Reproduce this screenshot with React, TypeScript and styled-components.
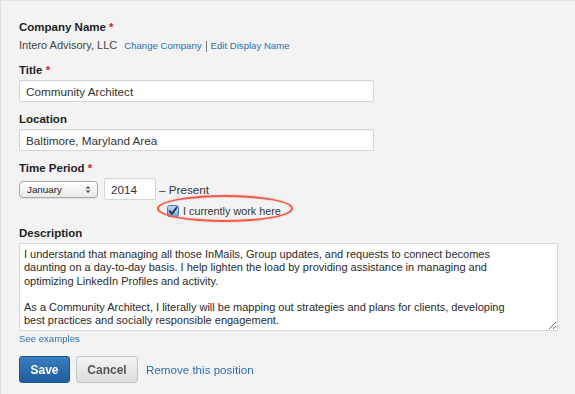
import { FC } from "react";
import styled, { createGlobalStyle } from "styled-components";

const GlobalStyle = createGlobalStyle`
  html, body {
    margin: 0;
    padding: 0;
    background: #f3f3f3;
  }
  body {
    font-family: "Liberation Sans", Arial, sans-serif;
    color: #333;
  }
`;

const description = `I understand that managing all those InMails, Group updates, and requests to connect becomes daunting on a day-to-day basis. I help lighten the load by providing assistance in managing and optimizing LinkedIn Profiles and activity.

As a Community Architect, I literally will be mapping out strategies and plans for clients, developing best practices and socially responsible engagement.`;

const App: FC = () => {
  return (
    <Page>
      <GlobalStyle />
      <Form>
        <Field>
          <Label>
            Company Name <Req>*</Req>
          </Label>
          <CompanyRow>
            <span>Intero Advisory, LLC</span>
            <LinkGroup>
              <SmallLink>Change Company</SmallLink>
              <Divider />
              <SmallLink>Edit Display Name</SmallLink>
            </LinkGroup>
          </CompanyRow>
        </Field>

        <Field>
          <Label>
            Title <Req>*</Req>
          </Label>
          <TextInput defaultValue="Community Architect" />
        </Field>

        <Field>
          <Label>Location</Label>
          <TextInput defaultValue="Baltimore, Maryland Area" />
        </Field>

        <Field>
          <Label>
            Time Period <Req>*</Req>
          </Label>
          <PeriodRow>
            <SelectBox>
              <span>January</span>
              <svg width="6" height="9" viewBox="0 0 6 9">
                <path d="M0.7 3.4 L3 1 L5.3 3.4 Z" fill="#444" />
                <path d="M0.7 5.6 L3 8 L5.3 5.6 Z" fill="#444" />
              </svg>
            </SelectBox>
            <YearInput defaultValue="2014" />
            <Present>– Present</Present>
          </PeriodRow>
          <CurrentRow>
            <Highlight />
            <CheckBox>
              <svg width="12" height="12" viewBox="0 0 12 12">
                <defs>
                  <linearGradient id="cb" x1="0" y1="0" x2="0" y2="1">
                    <stop offset="0" stopColor="#c6dcf6" />
                    <stop offset="1" stopColor="#6fa3e0" />
                  </linearGradient>
                </defs>
                <rect x="0.5" y="0.5" width="11" height="11" rx="2" fill="url(#cb)" stroke="#4a78b8" />
                <path d="M2.6 6.2 L5 8.8 L9.6 2.4" fill="none" stroke="#1b2a44" strokeWidth="1.7" strokeLinecap="round" strokeLinejoin="round" />
              </svg>
            </CheckBox>
            <CheckLabel>I currently work here</CheckLabel>
          </CurrentRow>
        </Field>

        <Field>
          <Label>Description</Label>
          <TextArea defaultValue={description} />
          <SmallLink>See examples</SmallLink>
        </Field>

        <Actions>
          <SaveButton>Save</SaveButton>
          <CancelButton>Cancel</CancelButton>
          <ActionLink>Remove this position</ActionLink>
        </Actions>
      </Form>
    </Page>
  );
};

export default App;

const Page = styled.div`
  width: 575px;
  height: 394px;
  box-sizing: border-box;
  border-left: 1px solid #dcdcdc;
  border-top: 1px solid #e2e2e2;
  background: #f3f3f3;
  overflow: hidden;
`;

const Form = styled.div`
  display: flex;
  flex-direction: column;
  padding: 18px 0 0 18px;
`;

const Field = styled.div`
  display: flex;
  flex-direction: column;
  align-items: flex-start;
  margin-bottom: 9px;
`;

const Label = styled.label`
  font-size: 11.5px;
  font-weight: 700;
  color: #1f1f1f;
  line-height: 16px;
  margin-bottom: 2px;
`;

const Req = styled.span`
  color: #c8232c;
`;

const CompanyRow = styled.div`
  display: flex;
  align-items: baseline;
  gap: 7px;
  font-size: 11px;
  color: #444;
  line-height: 14px;
  margin-top: 1px;
`;

const LinkGroup = styled.div`
  display: flex;
  align-items: center;
  gap: 4px;
`;

const SmallLink = styled.a`
  font-size: 9.6px;
  color: #2f6fad;
  cursor: pointer;
  line-height: 14px;
`;

const Divider = styled.span`
  width: 1px;
  height: 11px;
  background: #777;
`;

const TextInput = styled.input`
  box-sizing: border-box;
  width: 355px;
  height: 22px;
  border: 1px solid #d6d6d6;
  border-radius: 1px;
  background: #fff;
  padding: 0 6px;
  font-family: "Liberation Sans", Arial, sans-serif;
  font-size: 11.7px;
  color: #333;
  outline: none;
  box-shadow: inset 0 1px 1px rgba(0, 0, 0, 0.04);
`;

const PeriodRow = styled.div`
  display: flex;
  align-items: center;
  gap: 6px;
`;

const SelectBox = styled.div`
  box-sizing: border-box;
  width: 79px;
  height: 17px;
  display: flex;
  align-items: center;
  justify-content: space-between;
  padding: 0 6px 0 7px;
  border: 1px solid #a9a9a9;
  border-radius: 4px;
  background: linear-gradient(#ffffff, #e9e9e9);
  box-shadow: 0 1px 1px rgba(0, 0, 0, 0.08);
  font-size: 9.8px;
  color: #222;
`;

const YearInput = styled(TextInput)`
  width: 52px;
`;

const Present = styled.span`
  font-size: 11.7px;
  color: #333;
  margin-left: -3px;
`;

const CurrentRow = styled.div`
  position: relative;
  display: flex;
  align-items: center;
  gap: 4px;
  margin: 4px 0 -2px 148px;
  height: 14px;
`;

const Highlight = styled.span`
  position: absolute;
  box-sizing: border-box;
  left: -10px;
  top: -9px;
  width: 136px;
  height: 27px;
  border: 2px solid #ec5a4e;
  border-radius: 50%;
  box-shadow: 0 0 2px rgba(236, 90, 78, 0.5), inset 0 0 2px rgba(236, 90, 78, 0.4);
  pointer-events: none;
`;

const CheckBox = styled.span`
  display: flex;
  width: 12px;
  height: 12px;
`;

const CheckLabel = styled.span`
  font-size: 10.8px;
  color: #333;
`;

const TextArea = styled.textarea`
  box-sizing: border-box;
  width: 539px;
  height: 88px;
  border: 1px solid #d6d6d6;
  border-radius: 1px;
  background: #fff;
  padding: 4px 44px 4px 4px;
  font-family: "Liberation Sans", Arial, sans-serif;
  font-size: 11px;
  line-height: 13.3px;
  color: #2a2a2a;
  outline: none;
  resize: both;
  margin-bottom: 1px;
`;

const Actions = styled.div`
  display: flex;
  align-items: center;
  gap: 6px;
  margin-top: 1px;
`;

const SaveButton = styled.button`
  box-sizing: border-box;
  width: 51px;
  height: 27px;
  border: 1px solid #1b5590;
  border-radius: 3px;
  background: linear-gradient(#3a7dc0, #1f5c9b);
  color: #fff;
  font-family: "Liberation Sans", Arial, sans-serif;
  font-size: 12px;
  font-weight: 700;
  cursor: pointer;
`;

const CancelButton = styled.button`
  box-sizing: border-box;
  width: 62px;
  height: 27px;
  border: 1px solid #c4c4c4;
  border-radius: 3px;
  background: linear-gradient(#f4f4f4, #dcdcdc);
  color: #555;
  font-family: "Liberation Sans", Arial, sans-serif;
  font-size: 12px;
  font-weight: 700;
  cursor: pointer;
`;

const ActionLink = styled.a`
  font-size: 11.6px;
  color: #2f6fad;
  margin-left: 2px;
  cursor: pointer;
`;
